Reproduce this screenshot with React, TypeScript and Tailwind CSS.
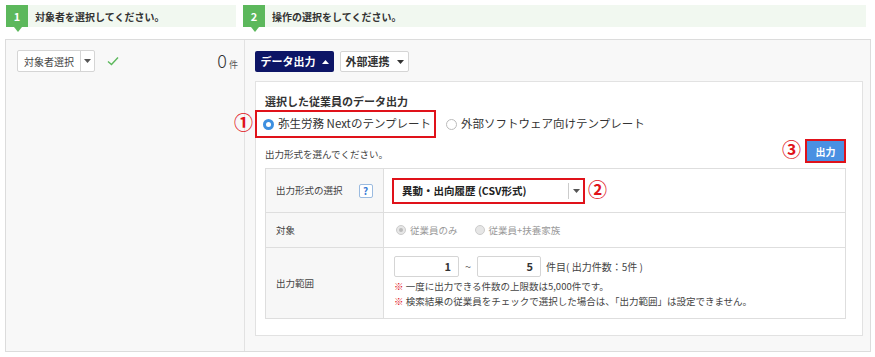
import React from "react";

const font = { fontFamily: '"Noto Sans CJK JP", "Noto Sans", sans-serif' };
const serif = { fontFamily: '"Liberation Serif", "Noto Sans CJK JP", serif' };

function Step({ n, text, className }: { n: string; text: string; className: string }) {
  return (
    <div className={`relative flex h-[22px] items-center bg-[#f1f8f0] ${className}`}>
      <div className="relative flex h-[22px] w-[22px] items-center justify-center bg-[#5cb85c] text-[11px] font-bold text-white">
        {n}
        <div className="absolute left-[8px] top-[22px] h-0 w-0 border-l-[4px] border-r-[4px] border-t-[5px] border-l-transparent border-r-transparent border-t-[#5cb85c]" />
      </div>
      <span className="ml-[7px] text-[10px] font-bold text-[#333]">{text}</span>
    </div>
  );
}

function Caret({ up = false, color = "#555" }: { up?: boolean; color?: string }) {
  return (
    <svg width="7" height="4" viewBox="0 0 7 4">
      {up ? <path d="M0 4 L3.5 0 L7 4 Z" fill={color} /> : <path d="M0 0 L7 0 L3.5 4 Z" fill={color} />}
    </svg>
  );
}

function Radio({ checked, disabled }: { checked?: boolean; disabled?: boolean }) {
  if (disabled) {
    return (
      <span className="flex h-[10px] w-[10px] items-center justify-center rounded-full border border-[#ccc] bg-[#e6e6e6]">
        {checked && <span className="h-[4px] w-[4px] rounded-full bg-[#bbb]" />}
      </span>
    );
  }
  return checked ? (
    <span className="flex h-[11px] w-[11px] items-center justify-center rounded-full bg-[#3d8fe0]">
      <span className="h-[5px] w-[5px] rounded-full bg-white" />
    </span>
  ) : (
    <span className="h-[11px] w-[11px] rounded-full border border-[#bbb] bg-white" />
  );
}

export default function App() {
  return (
    <div className="h-[357px] w-[875px] overflow-hidden bg-white text-[#333]" style={font}>
      <div className="flex gap-[7px] pl-[6px] pt-[5px]">
        <Step n="1" text="対象者を選択してください。" className="w-[230px]" />
        <Step n="2" text="操作の選択をしてください。" className="w-[623px]" />
      </div>

      <div className="ml-[5px] mt-[12px] flex h-[313px] w-[866px] border border-[#dcdcdc] bg-[#f8f8f8]">
        {/* left */}
        <div className="w-[239px] border-r border-[#e2e2e2] pl-[11px] pt-[10px]">
          <div className="flex items-center">
            <div className="flex h-[22px] items-center rounded-[2px] border border-[#d5d5d5] bg-white">
              <span className="px-[6px] text-[10px] text-[#444]">対象者選択</span>
              <span className="flex h-full w-[14px] items-center justify-center border-l border-[#d5d5d5]">
                <Caret />
              </span>
            </div>
            <svg className="ml-[12px]" width="12" height="10" viewBox="0 0 12 10">
              <path d="M1 5.5 L4.5 8.5 L11 1.5" stroke="#5cb85c" strokeWidth="1.4" fill="none" />
            </svg>
            <div className="ml-auto mr-[6px] flex items-baseline">
              <span className="text-[18px] font-light leading-none text-[#333]">0</span>
              <span className="ml-[2px] text-[9px] text-[#555]">件</span>
            </div>
          </div>
        </div>

        {/* right */}
        <div className="flex-1 pl-[10px] pr-[7px] pt-[11px]">
          <div className="flex gap-[6px]">
            <div className="flex h-[21px] w-[79px] items-center justify-center gap-[6px] rounded-[2px] bg-[#0d1566] text-[11px] font-bold text-white">
              データ出力
              <Caret up color="#fff" />
            </div>
            <div className="flex h-[21px] w-[69px] items-center justify-center gap-[7px] rounded-[2px] border border-[#d5d5d5] bg-white text-[11px] font-bold text-[#333]">
              外部連携
              <Caret color="#333" />
            </div>
          </div>

          <div className="mt-[9px] h-[255px] border border-[#e2e2e2] bg-white pl-[9px] pr-[16px] pt-[11px]">
            <div className="text-[11px] font-bold leading-[16px] text-[#333]">選択した従業員のデータ出力</div>
            <div className="mt-[1px] flex items-center">
              <div className="relative -ml-[10px] flex h-[28px] items-center whitespace-nowrap border-2 border-[#e0121a] pl-[6px] pr-[3px]">
                <span className="absolute -left-[23px] top-[2px] text-[19px] font-bold leading-[20px] text-[#e0121a]" style={serif}>①</span>
                <Radio checked />
                <span className="ml-[4px] text-[11.5px] text-[#333]">弥生労務 Nextのテンプレート</span>
              </div>
              <div className="ml-[10px] flex items-center whitespace-nowrap">
                <Radio />
                <span className="ml-[4px] text-[11.5px] text-[#333]">外部ソフトウェア向けテンプレート</span>
              </div>
            </div>

            <div className="mt-[1px] flex items-end justify-between">
              <span className="pb-[1px] text-[9.5px] leading-[16px] text-[#444]">出力形式を選んでください。</span>
              <div className="flex items-center">
                <span className="mr-[4px] text-[19px] font-bold leading-[20px] text-[#e0121a]" style={serif}>③</span>
                <div className="flex h-[24px] w-[41px] items-center justify-center border-2 border-[#e0121a] bg-[#4a90e2] text-[10px] font-bold text-white">
                  出力
                </div>
              </div>
            </div>

            <div className="mt-[5px] border border-[#dedede] text-[9.5px]">
              <div className="flex h-[44px] border-b border-[#dedede]">
                <div className="flex w-[118px] items-center border-r border-[#dedede] bg-[#f7f7f7] pl-[10px]">
                  <span className="text-[#444]">出力形式の選択</span>
                  <span className="ml-[16px] flex h-[14px] w-[14px] items-center justify-center rounded-[2px] border border-[#9bbbe0] bg-white text-[10px] font-bold text-[#3a7bd5]">?</span>
                </div>
                <div className="flex items-center pl-[8px]">
                  <div className="flex h-[26px] w-[193px] items-center border-2 border-[#e0121a] bg-white">
                    <span className="ml-[8px] flex-1 text-[10.5px] font-bold text-[#222]">異動・出向履歴 (CSV形式)</span>
                    <span className="flex h-[16px] w-[15px] items-center justify-center border-l border-[#ccc]">
                      <Caret />
                    </span>
                  </div>
                  <span className="ml-[3px] text-[19px] font-bold leading-[20px] text-[#e0121a]" style={serif}>②</span>
                </div>
              </div>
              <div className="flex h-[35px] border-b border-[#dedede]">
                <div className="flex w-[118px] items-center border-r border-[#dedede] bg-[#f7f7f7] pl-[10px] text-[#444]">対象</div>
                <div className="flex items-center pl-[12px] text-[#999]">
                  <Radio checked disabled />
                  <span className="ml-[4px]">従業員のみ</span>
                  <span className="ml-[17px]" />
                  <Radio disabled />
                  <span className="ml-[4px]">従業員+扶養家族</span>
                </div>
              </div>
              <div className="flex h-[70px]">
                <div className="flex w-[118px] items-center border-r border-[#dedede] bg-[#f7f7f7] pl-[10px] text-[#444]">出力範囲</div>
                <div className="pl-[10px] pt-[8px]">
                  <div className="flex items-center">
                    <div className="flex h-[21px] w-[65px] items-center justify-end rounded-[2px] border border-[#d5d5d5] pr-[7px] text-[11px] font-bold text-[#333]">1</div>
                    <span className="mx-[6px] text-[11px] text-[#666]">~</span>
                    <div className="flex h-[21px] w-[64px] items-center justify-end rounded-[2px] border border-[#d5d5d5] pr-[7px] text-[11px] font-bold text-[#333]">5</div>
                    <span className="ml-[5px] text-[10px] text-[#444]">件目( 出力件数：5件 )</span>
                  </div>
                  <div className="mt-[2px] leading-[15px] text-[#444]">
                    <div><span className="text-[#e0121a]">※</span> 一度に出力できる件数の上限数は5,000件です。</div>
                    <div><span className="text-[#e0121a]">※</span> 検索結果の従業員をチェックで選択した場合は、「出力範囲」は設定できません。</div>
                  </div>
                </div>
              </div>
            </div>
          </div>
        </div>
      </div>
    </div>
  );
}
